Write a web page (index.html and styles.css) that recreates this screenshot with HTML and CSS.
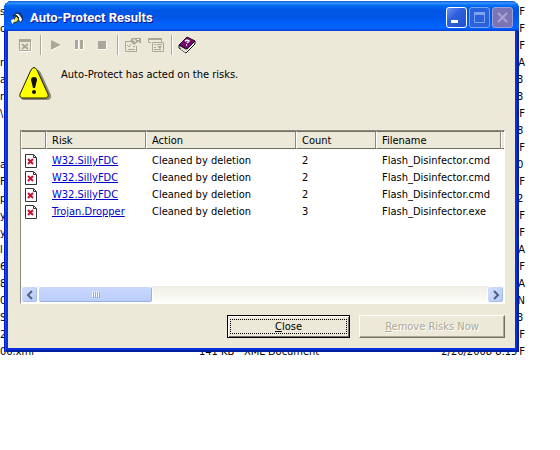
FILE: index.html
```html
<!DOCTYPE html>
<html lang="en">
	<head>
		<title>Auto-Protect Results</title>
		<meta charset="UTF-8">
		<link rel="stylesheet" href="styles.css">
	</head>
	<body>
		<!-- file list behind the dialog -->
		<div class="files">
			<div class="file"><span>s'</span><span class="end">F</span></div>
			<div class="file"><span>cs</span><span class="end">F</span></div>
			<div class="file"><span></span><span class="end">F</span></div>
			<div class="file"><span>rc</span><span class="end">A</span></div>
			<div class="file"><span>a</span><span class="end wide">3</span></div>
			<div class="file"><span>ne</span><span class="end wide">3</span></div>
			<div class="file"><span>\</span><span class="end">F</span></div>
			<div class="file"><span></span><span class="end wide">8</span></div>
			<div class="file"><span></span><span class="end">F</span></div>
			<div class="file"><span>al</span><span class="end wide">0</span></div>
			<div class="file"><span>F</span><span class="end">F</span></div>
			<div class="file"><span>p</span><span class="end wide">2</span></div>
			<div class="file"><span>y</span><span class="end">F</span></div>
			<div class="file"><span>y</span><span class="end">F</span></div>
			<div class="file"><span>l</span><span class="end">A</span></div>
			<div class="file"><span>6</span><span class="end">F</span></div>
			<div class="file"><span>8</span><span class="end">A</span></div>
			<div class="file"><span>0</span><span class="end">PN</span></div>
			<div class="file"><span>S</span><span class="end wide">3</span></div>
			<div class="file"><span>2</span><span class="end">F</span></div>
			<div class="file"><span class="name">06.xml</span><span class="size">141 KB</span><span class="type">XML Document</span><span class="date">2/26/2008 8:15</span><span class="end">F</span></div>
		</div>

		<div class="window">
			<div class="titlebar">
				<svg class="app-icon" width="14" height="14" viewBox="0 0 14 14">
					<path d="M2 5l4-3 4 2 2 5-3 2-1-4-3-3z" fill="#fff" stroke="#123" />
					<path d="M6 1h3l3 4v5L9 5z" fill="#123a7c" />
					<path d="M8 5l2 2v4l-2-2z" fill="#fff" />
					<path d="M3 8l2-3 3 3-2 3-3 1z" fill="#e9df4a" stroke="#26301c" />
					<path d="M0 9l3-1 1 2-3 3z" fill="#fff" />
				</svg>
				<h1 class="title">Auto-Protect Results</h1>
				<button class="caption" aria-label="Minimize"><svg width="19" height="19" viewBox="0 0 19 19"><path d="M4 12h7v3H4z" fill="#fff" /></svg></button>
				<button class="caption dim" aria-label="Maximize" disabled><svg width="19" height="19" viewBox="0 0 19 19"><path d="M4.500 5v9.500h10V5" fill="none" stroke="#7fa3f0" /><path d="M4 4h11v3H4z" fill="#7fa3f0" /></svg></button>
				<button class="caption dim close" aria-label="Close window" disabled><svg width="19" height="19" viewBox="0 0 19 19"><path d="M5 5l9 9M14 5l-9 9" stroke="#aaa4d4" stroke-width="2" /></svg></button>
			</div>

			<div class="content">
				<div class="toolbar">
					<button class="tool" aria-label="Remove" disabled><svg width="16" height="16" viewBox="0 0 16 16"><path d="M2.500 2.500h11v11h-11z" fill="none" stroke="#aca899" /><path d="M2 2h12v3H2z" fill="#aca899" /><path d="M5 7l6 5M11 7l-6 5" stroke="#aca899" stroke-width="2" /><path d="M3 14.500h11.500V4" fill="none" stroke="#fff" /></svg></button>
					<span class="separator"></span>
					<button class="tool" aria-label="Start" disabled><svg width="16" height="16" viewBox="0 0 16 16"><path d="M3 3l10 5-10 5z" fill="#aca899" /><path d="M3 13.500l10-5" stroke="#fff" /></svg></button>
					<button class="tool" aria-label="Pause" disabled><svg width="16" height="16" viewBox="0 0 16 16"><path d="M4 3h3v9H4zM9 3h3v9H9z" fill="#aca899" /><path d="M4 12.500h3.500V4M9 12.500h3.500V4" fill="none" stroke="#fff" /></svg></button>
					<button class="tool" aria-label="Stop" disabled><svg width="16" height="16" viewBox="0 0 16 16"><path d="M4 4h8v8H4z" fill="#aca899" /><path d="M5 12.500h7.500V5" fill="none" stroke="#fff" /></svg></button>
					<span class="separator"></span>
					<button class="tool" aria-label="Properties" disabled><svg width="16" height="16" viewBox="0 0 16 16"><path d="M8 4.500H.500v10h11V9" fill="none" stroke="#aca899" /><path d="M2 8l2 2 2-3M3 12.500h7M8 9.500h2" fill="none" stroke="#aca899" /><path d="M5 4l2-3h4l5 0v5h-2V4l-5 4z" fill="#aca899" /><path d="M8 3h2v2M12 2.500h2" fill="none" stroke="#fff" /></svg></button>
					<button class="tool" aria-label="View log" disabled><svg width="16" height="16" viewBox="0 0 16 16"><path d="M3 5.500H.500v-4h13v3M4.500 5.500h11v9h-11z" fill="none" stroke="#aca899" /><path d="M0 1h14v2H0z" fill="#aca899" /><path d="M6 7.500h2M9 7.500h5M6 10.500h2M6 12.500h7" stroke="#aca899" /><path d="M9 9h5l-2 3z" fill="#aca899" /></svg></button>
					<span class="separator"></span>
					<button class="tool" aria-label="Help"><svg width="18" height="18" viewBox="0 0 18 18"><path d="M1 9v3l7 5 9-9V5l-9 8z" fill="#d8d4c4" stroke="#111" /><path d="M3 13l5 3 8-8" fill="none" stroke="#fff" /><path d="M1 9l8-8 8 4-8 8z" fill="#750b70" stroke="#250625" /><path d="M7 5l2-1 2 1-2 2M8 9h1" fill="none" stroke="#fff" stroke-width="1.500" /></svg></button>
				</div>

				<div class="message">
					<svg width="33" height="34" viewBox="0 0 33 34">
						<path d="M17 3q3-1 5 3l10 22q1 4-3 5H5q-3 0-3-3z" fill="#8c8979" />
						<path d="M12 3q3-5 6 0l11 24q1 4-3 4H4q-4 0-3-4z" fill="#ff0" stroke="#1b1b00" />
						<path d="M12 13q0-3 3-3t3 3l-2 8h-2z" fill="#111" />
						<circle cx="15" cy="25" r="2" fill="#111" />
					</svg>
					<p>Auto-Protect has acted on the risks.</p>
				</div>

				<div class="list">
					<table class="risks">
						<thead>
							<tr><th class="col-icon"></th><th class="col-risk">Risk</th><th class="col-action">Action</th><th class="col-count">Count</th><th>Filename</th><th class="col-rest"></th></tr>
						</thead>
						<tbody>
							<tr><td class="mark"><svg width="12" height="14" viewBox="0 0 12 14"><path d="M.5.500h8l3 3v10H.500z" fill="#fff" stroke="#333" /><path d="M8.500 1v2.500H11" fill="none" stroke="#333" /><path d="M3 5l5 5M8 5l-5 5" stroke="#c8102c" stroke-width="2" /></svg></td><td><a href="#">W32.SillyFDC</a></td><td>Cleaned by deletion</td><td>2</td><td colspan="2">Flash_Disinfector.cmd</td></tr>
							<tr><td class="mark"><svg width="12" height="14" viewBox="0 0 12 14"><path d="M.5.500h8l3 3v10H.500z" fill="#fff" stroke="#333" /><path d="M8.500 1v2.500H11" fill="none" stroke="#333" /><path d="M3 5l5 5M8 5l-5 5" stroke="#c8102c" stroke-width="2" /></svg></td><td><a href="#">W32.SillyFDC</a></td><td>Cleaned by deletion</td><td>2</td><td colspan="2">Flash_Disinfector.cmd</td></tr>
							<tr><td class="mark"><svg width="12" height="14" viewBox="0 0 12 14"><path d="M.5.500h8l3 3v10H.500z" fill="#fff" stroke="#333" /><path d="M8.500 1v2.500H11" fill="none" stroke="#333" /><path d="M3 5l5 5M8 5l-5 5" stroke="#c8102c" stroke-width="2" /></svg></td><td><a href="#">W32.SillyFDC</a></td><td>Cleaned by deletion</td><td>2</td><td colspan="2">Flash_Disinfector.cmd</td></tr>
							<tr><td class="mark"><svg width="12" height="14" viewBox="0 0 12 14"><path d="M.5.500h8l3 3v10H.500z" fill="#fff" stroke="#333" /><path d="M8.500 1v2.500H11" fill="none" stroke="#333" /><path d="M3 5l5 5M8 5l-5 5" stroke="#c8102c" stroke-width="2" /></svg></td><td><a href="#">Trojan.Dropper</a></td><td>Cleaned by deletion</td><td>3</td><td colspan="2">Flash_Disinfector.exe</td></tr>
						</tbody>
					</table>
					<div class="scrollbar">
						<button class="arrow" aria-label="Scroll left"><svg width="8" height="10" viewBox="0 0 8 10"><path d="M6 1L2 5l4 4" fill="none" stroke="#4d6185" stroke-width="2" /></svg></button>
						<div class="thumb"><svg width="8" height="7" viewBox="0 0 8 7"><path d="M.5 0v6M2.500 0v6M4.500 0v6M6.500 0v6" stroke="#eef4fe" /><path d="M1.500 1v6M3.500 1v6M5.500 1v6M7.500 1v6" stroke="#8cb0f8" /></svg></div>
						<button class="arrow right" aria-label="Scroll right"><svg width="8" height="10" viewBox="0 0 8 10"><path d="M2 1l4 4-4 4" fill="none" stroke="#4d6185" stroke-width="2" /></svg></button>
					</div>
				</div>

				<div class="buttons">
					<button class="button default"><span class="focus"><u>C</u>lose</span></button>
					<button class="button remove" disabled><u>R</u>emove Risks Now</button>
				</div>
			</div>
		</div>
	</body>
</html>
```
FILE: styles.css
```css
* {
	box-sizing: border-box;
}

body {
	position: relative;
	margin: 0;
	background: #fff;
	color: #000;
	font-family: "DejaVu Sans Condensed", Tahoma, "DejaVu Sans", sans-serif;
	font-size: 11px;
	line-height: 13px;
}

button {
	font: inherit;
	color: inherit;
	padding: 0;
}

svg {
	display: block;
	flex: none;
}

.files {
	margin-right: 35px;
	padding-top: 3px;
}

.file {
	display: flex;
	height: 17px;
	line-height: 17px;
	white-space: nowrap;
}

.end {
	min-width: 5px;
	margin-left: auto;
}

.wide {
	min-width: 8px;
}

.name {
	width: 199px;
}

.size {
	width: 45px;
}

.type {
	flex: 1;
}

.date {
	width: 78px;
}

.window {
	position: absolute;
	top: 1px;
	left: 4px;
	right: 41px;
	padding: 0 4px 4px;
	border-radius: 8px 8px 0 0;
	background: #0831d9;
	box-shadow: inset 1px 0 #0019cf, inset 2px 0 #0855dd, inset -2px -2px #001ea0;
}

.titlebar {
	display: flex;
	align-items: center;
	gap: 2px;
	height: 30px;
	margin: 0 -4px;
	padding: 3px 6px 0 7px;
	border-radius: 8px 8px 0 0;
	background: linear-gradient(#0058d8 0, #3c94ff 7%, #0070f4 14%, #0058e6 28%, #0055e5 50%, #0060fc 76%, #0066ff 90%, #003dd7 100%);
}

.title {
	flex: 1;
	margin: 0 0 0 3px;
	color: #fff;
	font-family: Roboto, sans-serif;
	font-size: 13px;
	line-height: 18px;
	font-weight: bold;
	text-shadow: 1px 1px #0f1089;
}

.caption {
	width: 21px;
	height: 21px;
	border: 1px solid #fff;
	border-radius: 3px;
	background: linear-gradient(135deg, #6c93f4, #2f5fe0 40%, #1f50cc);
}

.dim {
	border-color: #7ba2f2;
	background: #2a61dd;
}

.close {
	border-color: #9d9fdd;
	background: #7c75b5;
}

.content {
	padding: 4px 10px 10px 12px;
	background: #ece9d8;
}

.toolbar {
	display: flex;
	align-items: center;
	gap: 3px;
	margin-left: -5px;
}

.tool {
	display: grid;
	place-items: center;
	width: 20px;
	height: 20px;
	border: 0;
	background: none;
}

.separator {
	width: 2px;
	height: 20px;
	margin: 0 1px 0 2px;
	border-left: 1px solid #aca899;
	border-right: 1px solid #fff;
}

.message {
	display: flex;
	gap: 9px;
	height: 75px;
	margin-left: -1px;
	padding-top: 12px;
}

.message p {
	margin: 1px 0 0;
}

.list {
	display: flex;
	flex-direction: column;
	height: 174px;
	border: 1px solid;
	border-color: #8d8a7b #fff #fff #8d8a7b;
	background: #fff;
}

.risks {
	width: 100%;
	table-layout: fixed;
	border-collapse: separate;
	border-spacing: 0;
}

.risks th {
	height: 18px;
	padding: 0 5px;
	background: #ece9d8;
	border: 1px solid;
	border-color: #716f64 #8d8a7b #716f64 #fff;
	font-weight: normal;
	text-align: left;
}

.risks .col-rest {
	width: 3px;
	padding: 0;
	border-right: 0;
}

.risks td {
	height: 17px;
	padding: 0 6px;
	white-space: nowrap;
}

.risks tbody::before {
	content: "";
	display: block;
	height: 3px;
}

.risks .mark {
	padding: 0 4px;
}

.risks a {
	color: #00c;
}

.col-icon {
	width: 25px;
}

.col-risk {
	width: 100px;
}

.col-action {
	width: 150px;
}

.col-count {
	width: 80px;
}

.scrollbar {
	display: flex;
	height: 17px;
	margin-top: auto;
	background: linear-gradient(#eeede5, #fefefb);
}

.arrow,
.thumb {
	display: grid;
	place-items: center;
	border: 1px solid #fff;
	border-radius: 3px;
	background: linear-gradient(135deg, #d0defe, #b9cbf6);
	box-shadow: inset -1px -1px #a5bbea;
}

.arrow {
	width: 17px;
}

.thumb {
	width: 115px;
	background: linear-gradient(#c8d8fd, #bacdfb);
	box-shadow: inset -1px -1px #98b0e8;
}

.right {
	margin-left: auto;
}

.buttons {
	display: flex;
	justify-content: flex-end;
	gap: 9px;
	padding-top: 11px;
}

.button {
	width: 123px;
	height: 23px;
	border: 1px solid;
	border-color: #fff #716f64 #716f64 #fff;
	background: #ece9d8;
	box-shadow: inset -1px -1px #aca899;
}

.default {
	padding: 2px;
	border-color: #000;
	box-shadow: inset 1px 1px #fff, inset -1px -1px #716f64;
}

.focus {
	display: block;
	border: 1px dotted #000;
}

.remove {
	width: 146px;
	color: #aca899;
	text-shadow: 1px 1px #fff;
}
```
